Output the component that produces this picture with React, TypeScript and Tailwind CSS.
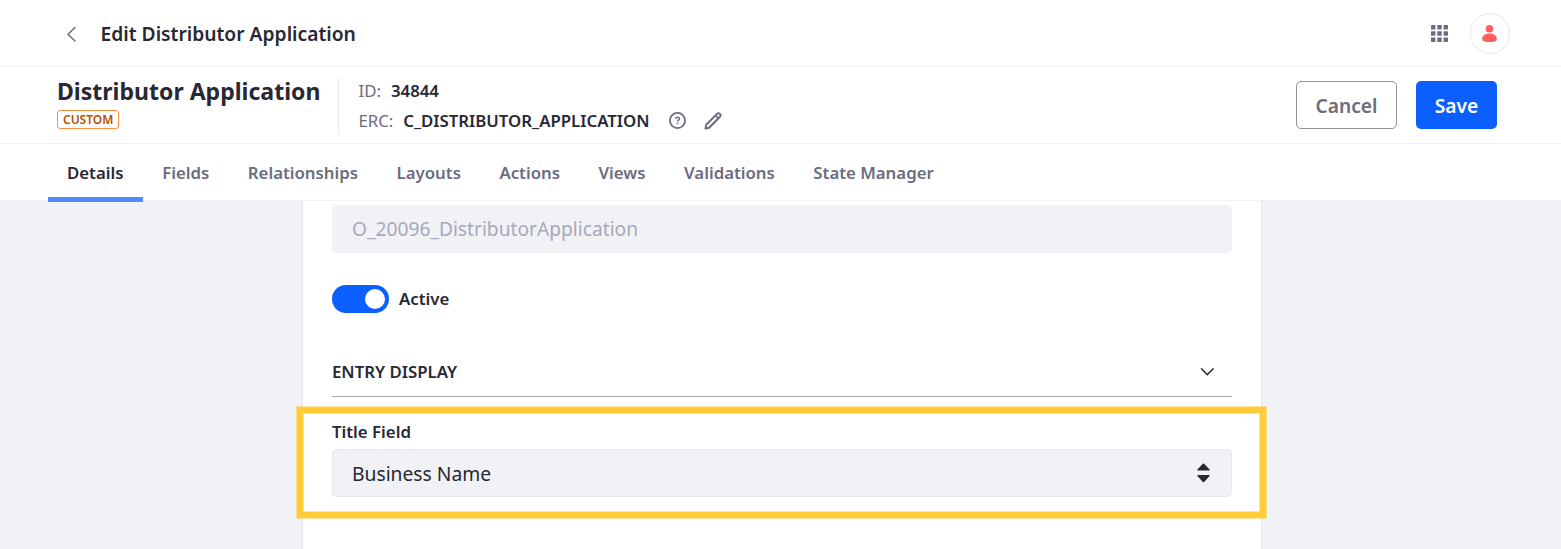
import React from "react";

const tabs = ["Details", "Fields", "Relationships", "Layouts", "Actions", "Views", "Validations", "State Manager"];

function TopBar() {
  return (
    <header className="flex h-[67px] shrink-0 items-center border-b border-[#f1f2f5] pt-px pr-[51px] pl-[66px]">
      <svg className="h-4 w-3" viewBox="0 0 12 16" fill="none" stroke="#6b6c7e" strokeWidth="1.5" strokeLinecap="round" strokeLinejoin="round">
        <path d="M9 1.5 2 8.3 9 15" />
      </svg>
      <h1 className="ml-[22.5px] pt-px text-[19.25px] leading-6 font-semibold">Edit Distributor Application</h1>
      <div className="ml-auto flex items-center gap-[22px]">
        <svg className="-mt-px h-[17px] w-[17px]" viewBox="0 0 17 17" fill="#6b6c7e">
          {[0, 6.3, 12.6].map((y) =>
            [0, 6.3, 12.6].map((x) => <rect key={`${x}-${y}`} x={x} y={y} width="4.4" height="4.4" rx="0.4" />)
          )}
        </svg>
        <div className="flex h-[41px] w-10 items-center justify-center rounded-full border border-[#e7e7ed] pr-px">
          <svg className="h-[17px] w-[15px]" viewBox="0 0 15 17" fill="#ff5f5f">
            <circle cx="7.5" cy="3.8" r="3.8" />
            <path d="M7.5 8.4c4.2 0 7.3 2.2 7.3 5.1 0 2.7-2.4 3.4-4.2 3.4H4.4c-1.8 0-4.2-.7-4.2-3.4 0-2.9 3.1-5.1 7.3-5.1Z" />
          </svg>
        </div>
      </div>
    </header>
  );
}

function ObjectBar() {
  return (
    <section className="flex h-[77px] shrink-0 border-b border-[#f1f2f5] pr-16 pl-[57px]">
      <div className="mt-[11px] flex h-[55px] w-[282px] flex-col items-start border-r border-[#e7e7ed]">
        <h2 className="text-[23.04px] leading-[26px] font-bold whitespace-nowrap">Distributor Application</h2>
        <span className="mt-[6px] flex h-[19px] items-center rounded-[3px] border border-[#ff8f39] px-[5px] text-[12px] leading-none font-semibold text-[#b95000]">
          CUSTOM
        </span>
      </div>
      <div className="ml-[19.5px] flex flex-col pt-[9px] text-[16.8px] leading-[30px]">
        <div className="flex gap-[10px]">
          <span className="text-[#6b6c7e]">ID:</span>
          <strong className="font-semibold">34844</strong>
        </div>
        <div className="flex items-center gap-[9.8px]">
          <span className="text-[#6b6c7e]">ERC:</span>
          <strong className="font-semibold">C_DISTRIBUTOR_APPLICATION</strong>
          <svg className="-mt-px ml-[9.5px] h-[17px] w-[17px]" viewBox="0 0 16 16" fill="none" stroke="#6b6c7e">
            <circle cx="8" cy="8" r="7.1" strokeWidth="1.7" />
            <path d="M6.2 6.5c.1-1 .8-1.600 1.900-1.600 1 0 1.700.6 1.700 1.500 0 1.200-1.700 1.200-1.700 2.500" strokeWidth="1.4" />
            <circle cx="8.05" cy="10.7" r=".85" fill="#6b6c7e" stroke="none" />
          </svg>
          <svg className="-mt-px ml-[8.5px] h-[18px] w-[18px]" viewBox="0 0 18 18" fill="none" stroke="#6b6c7e" strokeWidth="2" strokeLinejoin="round">
            <path d="M1.500 16.500 2.200 12.700 13 1.900c.9-.9 2.100-.8 2.900 0s.9 2 0 2.900L5.200 15.700Z" />
            <path d="m11.600 3.600 2.700 2.700" strokeWidth="1.600" />
          </svg>
        </div>
      </div>
      <div className="ml-auto flex gap-[19px] pt-[14px] text-[19.2px] font-semibold">
        <button className="h-12 w-[101px] rounded-[5px] border border-[#9091a1] pt-0.5 text-[#6b6c7e]">Cancel</button>
        <button className="h-12 w-[81px] rounded-[5px] bg-[#0b5fff] pt-0.5 text-white">Save</button>
      </div>
    </section>
  );
}

function TabBar() {
  return (
    <nav className="relative z-10 flex h-[57px] shrink-0 border-b border-[#f1f2f5] pl-12 text-[16.8px] font-semibold">
      {tabs.map((tab, i) => (
        <div
          key={tab}
          className={
            i === 0
              ? "h-[58px] border-b-5 border-[#528bff] pr-[19.4px] pl-[19px] pt-4 leading-[26px] text-[#272833]"
              : "h-[58px] px-[19.25px] pt-4 leading-[26px] text-[#6b6c7e]"
          }
        >
          {tab}
        </div>
      ))}
    </nav>
  );
}

export default function App() {
  return (
    <div className="flex h-[549px] w-[1561px] flex-col overflow-hidden bg-white font-['Noto_Sans',sans-serif] text-[#272833]">
      <TopBar />
      <ObjectBar />
      <TabBar />
      <main className="relative flex flex-1 bg-[#f1f2f5] pl-[302px]">
        <div className="w-[960px] border-x border-[#e7e7ed] bg-white px-[29px] pt-1">
          <div className="flex h-12 items-center rounded-[5px] bg-[#f1f2f5] px-5 text-[19.2px] text-[#a7a9bc]">
            O_20096_DistributorApplication
          </div>
          <div className="mt-8 flex h-7 items-center">
            <div className="flex h-7 w-[57px] items-center justify-end rounded-full bg-[#0b5fff] pr-1">
              <div className="h-5 w-5 rounded-full bg-white" />
            </div>
            <span className="ml-[10px] text-[16.8px] font-semibold">Active</span>
          </div>
          <div className="mt-[34px] flex h-[50px] items-center justify-between border-b border-[#a7a9bc] pr-[17px] text-[16.8px] font-semibold">
            <span>ENTRY DISPLAY</span>
            <svg className="h-[9px] w-[15px]" viewBox="0 0 15 9" fill="none" stroke="#272833" strokeWidth="1.5" strokeLinecap="round" strokeLinejoin="round">
              <path d="m1.500 1.800 5.800 5.900 5.800-5.900" />
            </svg>
          </div>
          <div className="mt-[22px] text-[16.8px] leading-[26px] font-semibold">Title Field</div>
          <div className="mt-1 flex h-12 items-center justify-between rounded-[5px] border border-[#e7e7ed] bg-[#f1f2f5] pr-[21px] pl-[19px] text-[19.25px]">
            <span className="pt-0.5">Business Name</span>
            <svg className="-mt-px h-5 w-[13px]" viewBox="0 0 13 20" fill="#272833">
              <path d="M5.900.7c.3-.4.900-.4 1.200 0l5.300 5.600c.5.600.2 1.300-.6 1.300H1.200C.4 7.600.1 6.900.6 6.300ZM5.900 18.900c.3.400.9.400 1.200 0l5.300-5.600c.5-.6.2-1.300-.6-1.300H1.200c-.8 0-1.100.7-.6 1.300Z" />
            </svg>
          </div>
        </div>
        <div className="absolute top-[206px] left-[297px] h-[111px] w-[969px] border-[6px] border-[#ffcb39] shadow-[0_0_0_1px_#ffcb3980,inset_0_0_0_1px_#ffcb3980]" />
      </main>
    </div>
  );
}
